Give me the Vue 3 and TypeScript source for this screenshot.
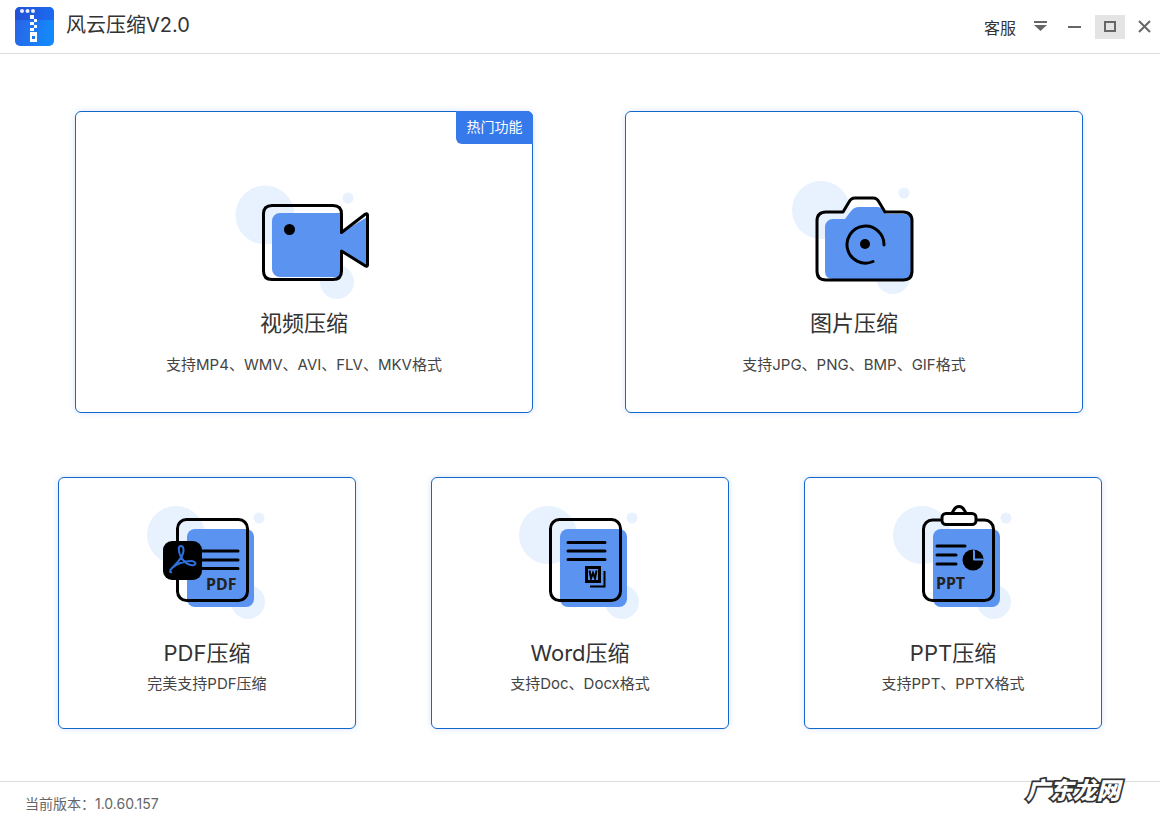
<template>
  <div class="app">
    <header class="titlebar">
      <div class="brand">
        <svg class="logo" width="39" height="39" viewBox="15 7 39 39">
          <defs>
            <linearGradient id="logoBody" x1="0" y1="0" x2="1" y2="0.3">
              <stop offset="0" stop-color="#2c5fe3" />
              <stop offset="1" stop-color="#1488fb" />
            </linearGradient>
            <linearGradient id="logoBar" x1="0" y1="0" x2="1" y2="0">
              <stop offset="0" stop-color="#2350d6" />
              <stop offset="1" stop-color="#1b6cf0" />
            </linearGradient>
          </defs>
          <rect x="15" y="7" width="39" height="39" rx="5" fill="url(#logoBody)" />
          <path d="M15 20V12a5 5 0 0 1 5-5h29a5 5 0 0 1 5 5v8z" fill="url(#logoBar)" />
          <circle cx="22" cy="11" r="2" fill="#e8eefc" />
          <circle cx="27.500" cy="11" r="2" fill="#e8eefc" />
          <circle cx="33" cy="11" r="2" fill="#e8eefc" />
          <rect x="30" y="15" width="4" height="4" fill="#fff" />
          <rect x="34" y="19" width="3" height="3" fill="#fff" />
          <rect x="30" y="22" width="4" height="3" fill="#fff" />
          <rect x="34" y="25" width="3" height="3" fill="#fff" />
          <rect x="30" y="28" width="4" height="3" fill="#fff" />
          <rect x="30" y="32" width="7" height="10" fill="#fff" />
          <rect x="32" y="36" width="3" height="3" fill="#1a75f0" />
        </svg>
        <span class="app-name">风云压缩V2.0</span>
      </div>
      <div class="controls">
        <span class="service">客服</span>
        <svg class="ctl menu" width="13" height="11" viewBox="0 0 13 11">
          <rect x="0" y="0" width="13" height="2" fill="#666" />
          <path d="M0 4h13l-6.500 6z" fill="#666" />
        </svg>
        <svg class="ctl minimize" width="13" height="2" viewBox="0 0 13 2">
          <rect width="13" height="2" fill="#666" />
        </svg>
        <div class="maximize">
          <svg width="12" height="11" viewBox="0 0 12 11">
            <rect x="1" y="1" width="10" height="9" fill="none" stroke="#666" stroke-width="2" />
          </svg>
        </div>
        <svg class="ctl close" width="13" height="13" viewBox="0 0 13 13">
          <path d="M1 1l11 11M12 1L1 12" stroke="#666" stroke-width="2" fill="none" />
        </svg>
      </div>
    </header>

    <main class="content">
      <div class="row row-top">
        <div class="card card-large">
          <span class="badge">热门功能</span>
          <svg class="icon" width="144" height="120" viewBox="232 180 144 120">
            <circle cx="265" cy="215" r="29.500" fill="#e8f1fe" />
            <circle cx="348" cy="198" r="5.500" fill="#e8f1fe" />
            <circle cx="337" cy="282" r="17" fill="#e8f1fe" />
            <path d="M280 213h61v20l26-16v51l-26-16v25h-61a8 8 0 0 1-8-8v-48a8 8 0 0 1 8-8z" fill="#5b93f0" />
            <path d="M341.500 232.500V214q0-8.500-8.500-8.500h-61q-8.500 0-8.500 8.500v57q0 8.500 8.500 8.500h61q8.500 0 8.500-8.500v-20l24 15q2 1 2-1v-50q0-2-2-1z" fill="none" stroke="#000" stroke-width="3" stroke-linejoin="round" />
            <circle cx="289.500" cy="229.500" r="5.500" fill="#000" />
          </svg>
          <h2 class="title">视频压缩</h2>
          <p class="desc desc-large">支持MP4、WMV、AVI、FLV、MKV格式</p>
        </div>
        <div class="card card-large">
          <svg class="icon" width="144" height="120" viewBox="782 180 144 120">
            <circle cx="821" cy="210" r="29" fill="#e8f1fe" />
            <circle cx="904" cy="193" r="5.500" fill="#e8f1fe" />
            <circle cx="893" cy="277" r="17" fill="#e8f1fe" />
            <path d="M825 227a8 8 0 0 1 8-8h12l6-8q3-4 8-4h19q3 0 5 3l3 4h18q9 0 9 9v47q0 9-9 9h-71q-8 0-8-8z" fill="#5b93f0" />
            <path d="M826 212h17l6-10q2-4 6-4h18q4 0 6 4l6 10h18q9 0 9 9v50q0 9-9 9h-77q-9 0-9-9v-50q0-9 9-9z" fill="none" stroke="#000" stroke-width="3" stroke-linejoin="round" />
            <path d="M884 245a18.500 18.500 0 1 0-11 16.500" fill="none" stroke="#000" stroke-width="3" stroke-linecap="round" />
            <circle cx="865" cy="244" r="5" fill="#000" />
          </svg>
          <h2 class="title">图片压缩</h2>
          <p class="desc desc-large">支持JPG、PNG、BMP、GIF格式</p>
        </div>
      </div>

      <div class="row row-bottom">
        <div class="card card-small">
          <svg class="icon" width="144" height="120" viewBox="135 500 144 120">
            <circle cx="176" cy="535" r="29" fill="#e8f1fe" />
            <circle cx="259" cy="518" r="5.500" fill="#e8f1fe" />
            <circle cx="248" cy="602" r="17" fill="#e8f1fe" />
            <rect x="187" y="529" width="67" height="78" rx="8" fill="#5b93f0" />
            <rect x="177.500" y="519.500" width="70" height="81" rx="9" fill="none" stroke="#000" stroke-width="3" />
            <path d="M202 551h36M202 560h36M202 568.500h36" stroke="#000" stroke-width="3" stroke-linecap="round" />
            <rect x="163" y="541" width="39" height="39" rx="9" fill="#000" />
            <path d="M170 571C172 566 178 564 182 556C185 549 183 546 181 546C178 546 178 551 181 557C184 563 190 566 194 565C197 564 195 561 191 561C184 561 176 564 172 568C169 571 170 573 172 572" fill="none" stroke="#2d6fdc" stroke-width="2" />
            <text x="206" y="589.500" class="doc-label">PDF</text>
          </svg>
          <h2 class="title">PDF压缩</h2>
          <p class="desc">完美支持PDF压缩</p>
        </div>
        <div class="card card-small">
          <svg class="icon" width="144" height="120" viewBox="508 500 144 120">
            <circle cx="548" cy="535" r="29" fill="#e8f1fe" />
            <circle cx="632" cy="518" r="5.500" fill="#e8f1fe" />
            <circle cx="622" cy="602" r="17" fill="#e8f1fe" />
            <rect x="560" y="529" width="67" height="78" rx="8" fill="#5b93f0" />
            <rect x="550.500" y="519.500" width="70" height="81" rx="9" fill="none" stroke="#000" stroke-width="3" />
            <path d="M568 542.500h37M568 551h37M568 559.500h37" stroke="#000" stroke-width="3" stroke-linecap="round" />
            <rect x="586.500" y="567.500" width="13" height="14" fill="none" stroke="#000" stroke-width="3" />
            <path d="M589.500 570.500l1.500 8 2-5.500 2 5.500 1.500-8" fill="none" stroke="#000" stroke-width="2" />
            <path d="M604.500 571v15.500h-14.500" fill="none" stroke="#000" stroke-width="2" />
          </svg>
          <h2 class="title">Word压缩</h2>
          <p class="desc">支持Doc、Docx格式</p>
        </div>
        <div class="card card-small">
          <svg class="icon" width="144" height="120" viewBox="881 500 144 120">
            <circle cx="922" cy="535" r="29" fill="#e8f1fe" />
            <circle cx="1006" cy="518" r="5.500" fill="#e8f1fe" />
            <circle cx="994" cy="602" r="17" fill="#e8f1fe" />
            <rect x="933" y="529" width="67" height="78" rx="8" fill="#5b93f0" />
            <rect x="923.500" y="520" width="70" height="80.500" rx="9" fill="none" stroke="#000" stroke-width="3" />
            <path d="M951 513c3 0 2-6.500 8-6.500s5 6.500 8 6.500" fill="#fff" stroke="#000" stroke-width="3" />
            <rect x="942" y="513.500" width="34" height="11" rx="4" fill="#fff" stroke="#000" stroke-width="3" />
            <path d="M937 546h28M937 555h19M937 564h19" stroke="#000" stroke-width="3" stroke-linecap="round" />
            <circle cx="973" cy="560" r="10.500" fill="#000" />
            <path d="M973.500 549.500v10.500h10.500" fill="#5b93f0" stroke="#5b93f0" stroke-width="1" />
            <path d="M975 550a10 10 0 0 1 8.500 8.500h-8.500z" fill="#000" />
            <text x="936" y="588.500" class="doc-label">PPT</text>
          </svg>
          <h2 class="title">PPT压缩</h2>
          <p class="desc">支持PPT、PPTX格式</p>
        </div>
      </div>
    </main>

    <footer class="statusbar">当前版本：1.0.60.157</footer>
    <div class="watermark">广东龙网</div>
  </div>
</template>

<script setup lang="ts">
// static screen, nothing to wire up
</script>

<style>
html,
body {
  margin: 0;
  background: #fff;
}
</style>

<style scoped>
.app {
  position: relative;
  width: 1160px;
  height: 821px;
  display: flex;
  flex-direction: column;
  overflow: hidden;
  background: #fff;
  font-family: Inter, "Noto Sans CJK SC", sans-serif;
  color: #333;
}

.titlebar {
  height: 53px;
  flex: none;
  display: flex;
  align-items: center;
  justify-content: space-between;
  border-bottom: 1px solid #dcdcdc;
}

.brand {
  display: flex;
  align-items: center;
  padding-left: 15px;
}

.app-name {
  margin-left: 12px;
  margin-top: -3px;
  font-size: 20px;
  line-height: 28px;
  color: #333;
}

.controls {
  display: flex;
  align-items: center;
  padding-right: 9px;
}

.service {
  font-size: 16px;
  color: #333;
  margin-right: 18px;
}

.minimize {
  margin-left: 21px;
}

.maximize {
  width: 30px;
  height: 24px;
  margin-left: 14px;
  background: #e4e4e4;
  display: flex;
  align-items: center;
  justify-content: center;
}

.close {
  margin-left: 13px;
}

.content {
  flex: 1;
  padding-top: 57px;
  display: flex;
  flex-direction: column;
  gap: 64px;
}

.row {
  display: flex;
}

.row-top {
  padding-left: 75px;
  gap: 92px;
}

.row-bottom {
  padding-left: 58px;
  gap: 75px;
}

.card {
  position: relative;
  box-sizing: border-box;
  display: flex;
  flex-direction: column;
  align-items: center;
  background: #fff;
  border: 1px solid #1268cc;
  border-radius: 6px;
  box-shadow: 0 0 6px rgba(40, 100, 200, 0.18);
}

.card-large {
  width: 458px;
  height: 302px;
  padding-top: 68px;
}

.card-small {
  width: 298px;
  height: 252px;
  padding-top: 22px;
}

.badge {
  position: absolute;
  top: -1px;
  right: -1px;
  width: 77px;
  height: 33px;
  line-height: 32px;
  text-align: center;
  font-size: 14px;
  color: #fff;
  background: #3579ea;
  border-radius: 0 6px 0 6px;
}

.icon {
  display: block;
  flex: none;
}

.title {
  margin: 18px 0 0;
  font-size: 22px;
  line-height: 30px;
  font-weight: 400;
  color: #333;
}

.card-large .title {
  margin-top: 8px;
}

.desc {
  margin: 6px 0 0;
  font-size: 15px;
  line-height: 20px;
  color: #444;
}

.desc-large {
  margin-top: 17px;
}

.doc-label {
  font-family: "Noto Sans", sans-serif;
  font-size: 16px;
  font-weight: 700;
  fill: #222;
}

.statusbar {
  height: 40px;
  flex: none;
  box-sizing: border-box;
  border-top: 1px solid #dcdcdc;
  padding: 12px 0 0 25px;
  font-size: 14px;
  line-height: 20px;
  color: #666;
}

.watermark {
  position: absolute;
  left: 1026px;
  top: 774px;
  font-size: 23.500px;
  line-height: 34px;
  font-weight: 900;
  font-style: italic;
  color: #fff;
  -webkit-text-stroke: 3.500px #333;
  paint-order: stroke fill;
}
</style>
